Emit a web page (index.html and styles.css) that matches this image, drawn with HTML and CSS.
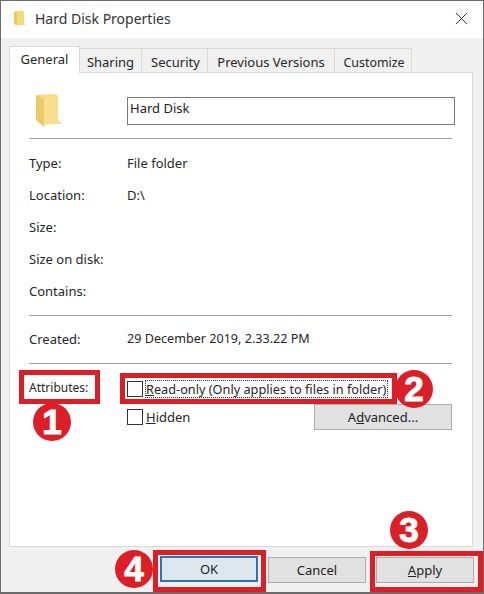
FILE: index.html
```html
<!DOCTYPE html>
<html lang="en">
<head>
<meta charset="utf-8">
<title>Hard Disk Properties</title>
<link rel="stylesheet" href="styles.css">
</head>
<body>
<div class="window">
  <header class="titlebar">
    <svg class="title-icon" viewBox="0 0 14 17"><path d="M1 1.5 L9.5 0.5 L11 1.5 V14 L13 15 H4 L1 13.5 Z" fill="#f5d97c"/><path d="M1 1.5 L4 3 V16 L1 13.5 Z" fill="#ecc75c"/></svg>
    <span class="title">Hard Disk Properties</span>
    <svg class="close" viewBox="0 0 14 14"><path d="M1 1 L13 13 M13 1 L1 13" stroke="#222" stroke-width="1" fill="none"/></svg>
  </header>
  <div class="content">
    <nav class="tabs">
      <span class="tab active">General</span>
      <span class="tab t-sharing">Sharing</span>
      <span class="tab t-security">Security</span>
      <span class="tab t-previous">Previous Versions</span>
      <span class="tab t-customize">Customize</span>
    </nav>
    <section class="panel">
      <div class="name-row">
        <svg class="folder" viewBox="0 0 26 35"><path d="M1 2 L21 1 L23 3 V27 L25.500 29 V31 H9 L1 27 Z" fill="#f6dc86"/><path d="M1 2 L9 6 V34 L1 27 Z" fill="#eec968"/><path d="M9 6 L9 34 L25.500 29 L23 27 V3 Z" fill="#f8e199" opacity=".5"/></svg>
        <div class="name-box">Hard Disk</div>
      </div>
      <hr class="sep first">
      <div class="info">
        <div class="row"><span class="label">Type:</span><span>File folder</span></div>
        <div class="row"><span class="label">Location:</span><span>D:\</span></div>
        <div class="row"><span class="label">Size:</span></div>
        <div class="row"><span class="label">Size on disk:</span></div>
        <div class="row"><span class="label">Contains:</span></div>
      </div>
      <hr class="sep">
      <div class="row created"><span class="label">Created:</span><span class="date">29 December 2019, 2.33.22 PM</span></div>
      <hr class="sep">
      <div class="attrs">
        <span class="label attr-label">Attributes:</span>
        <div class="attr-options">
          <div class="check-row"><span class="box"></span><span class="focus"><u>R</u>ead-only (Only applies to files in folder)</span></div>
          <div class="check-row second">
            <span class="box"></span><span class="hidden-label"><u>H</u>idden</span>
            <button class="btn advanced">A<u>d</u>vanced...</button>
          </div>
        </div>
      </div>
    </section>
    <footer class="actions">
      <button class="btn primary">OK</button>
      <button class="btn">Cancel</button>
      <button class="btn"><u>A</u>pply</button>
    </footer>
  </div>
  <div class="mark m1"></div>
  <div class="mark m2"></div>
  <div class="mark m3"></div>
  <div class="mark m4"></div>
  <span class="badge b1">1</span>
  <span class="badge b2">2</span>
  <span class="badge b3">3</span>
  <span class="badge b4">4</span>
</div>
</body>
</html>
```

FILE: styles.css
```css
* { box-sizing: border-box; }
html, body { margin: 0; padding: 0; }
body { width: 484px; height: 594px; overflow: hidden; background: #fff; }
.window {
  position: relative;
  width: 484px;
  height: 594px;
  border: 1px solid #6b6b6b;
  border-bottom-width: 2px;
  background: #f0f0f0;
  display: flex;
  flex-direction: column;
  font-family: "Noto Sans", "Open Sans", sans-serif;
  font-size: 13px;
  color: #262626;
  overflow: hidden;
}
.titlebar {
  height: 37px;
  flex: none;
  background: #fff;
  display: flex;
  align-items: center;
  padding: 0 14px 2px 12px;
}
.title-icon { width: 14px; height: 17px; margin-right: 8px; }
.title { font-size: 14px; color: #333; flex: 1; }
.close { width: 13px; height: 13px; margin: 0 1px 0 0; }
.content { flex: 1; display: flex; flex-direction: column; padding: 0 10px 0 8px; min-height: 0; }
.tabs { height: 35px; flex: none; display: flex; align-items: flex-end; position: relative; z-index: 1; margin-top: -1px; padding-top: 9px; }
.tab {
  height: 24px;
  background: #f0f0f0;
  border: 1px solid #d9d9d9;
  border-bottom: 0;
  border-left: 0;
  display: flex;
  align-items: center;
  justify-content: center;
  padding-top: 2px;
  font-size: 13px;
}
.tab.active {
  width: 71px;
  height: 27px;
  margin-bottom: -1px;
  background: #fff;
  border-left: 1px solid #d9d9d9;
  padding-top: 0;
  padding-bottom: 3px;
}
.t-sharing { width: 62px; }
.t-security { width: 66px; padding-left: 2px; }
.t-previous { width: 127px; }
.t-customize { width: 77px; font-size: 12.4px; padding-left: 2px; padding-top: 3px; }
.panel {
  height: 475px;
  flex: none;
  background: #fff;
  border: 1px solid #d9d9d9;
  padding: 0 20px 0 19px;
}
.name-row { display: flex; align-items: flex-start; padding-top: 20px; height: 65px; }
.folder { width: 26px; height: 35px; flex: none; margin: 0 0 0 6px; }
.name-box {
  width: 328px;
  height: 28px;
  flex: none;
  margin: 4px 0 0 66px;
  border: 1px solid #7a7a7a;
  padding: 0 0 0 2px;
  line-height: 20px;
  color: #222;
}
.sep { border: 0; border-top: 1px solid #a0a0a0; margin: 0; height: 1px; }
.info { padding: 8px 0; }
.row { display: flex; height: 32px; align-items: center; }
.label { width: 98px; flex: none; }
.date { font-size: 12.6px; }
.created { height: 47px; padding-bottom: 2px; }
.attrs { display: flex; position: relative; padding-top: 10px; }
.attr-label { padding-top: 5px; font-size: 12px; }
.attr-options { flex: 1; padding-top: 2px; }
.check-row { display: flex; align-items: center; height: 26px; }
.check-row.second { position: relative; height: 32px; margin-top: 3px; align-items: flex-start; padding-top: 4px; }
.box { width: 16px; height: 16px; border: 1px solid #333; background: #fff; margin-right: 3px; flex: none; }
.focus { outline: 1px dotted #333; padding: 0 1px 0 0; line-height: 16px; white-space: nowrap; font-size: 12.73px; }
.hidden-label { line-height: 16px; }
.btn {
  width: 98px;
  height: 26px;
  border: 1px solid #adadad;
  background: #e1e1e1;
  font: inherit;
  color: #222;
  padding: 0;
}
.advanced { position: absolute; right: 0; top: -1px; width: 138px; height: 26px; }
.actions { flex: 1; display: flex; justify-content: flex-end; gap: 10px; padding: 10px 0 0; margin-right: -1px; align-items: flex-start; }
.primary { border: 2px solid #2d74b0; background: #dfe7ee; margin-top: -1px; }
.mark { position: absolute; border: 5px solid #dc1f27; pointer-events: none; }
.m1 { left: 18px; top: 369px; width: 81px; height: 34px; }
.m2 { left: 119px; top: 372px; width: 277px; height: 31px; }
.m3 { left: 369px; top: 550px; width: 113px; height: 41px; }
.m4 { left: 152px; top: 549px; width: 113px; height: 42px; }
.badge {
  position: absolute;
  width: 38px;
  height: 38px;
  border-radius: 50%;
  background: #dc1f27;
  color: #fff;
  font-family: "Liberation Sans", Arial, sans-serif;
  font-weight: 700;
  font-size: 35px;
  line-height: 38px;
  text-align: center;
  -webkit-text-stroke: 1px #fff;
}
.b1 { left: 32px; top: 402px; }
.b2 { left: 394px; top: 369px; }
.b3 { left: 389px; top: 510px; }
.b4 { left: 114px; top: 549px; }
```
